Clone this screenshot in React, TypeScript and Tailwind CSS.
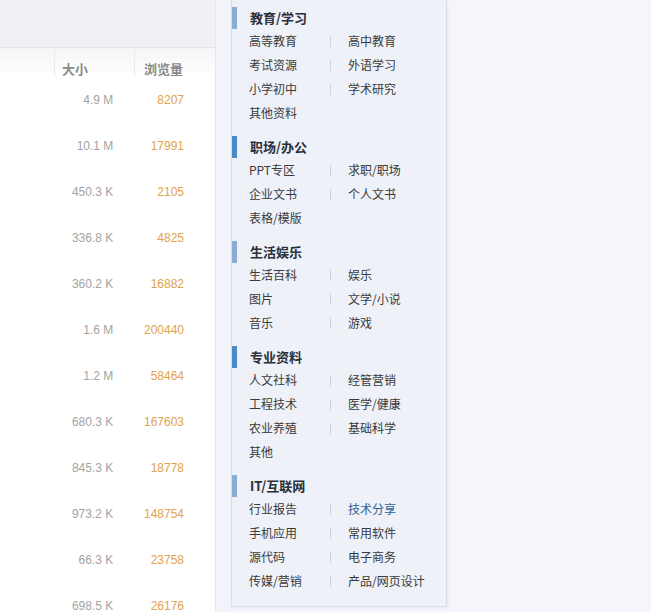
import React from "react";

type Row = { size: string; views: string };

const rows: Row[] = [
  { size: "4.9 M", views: "8207" },
  { size: "10.1 M", views: "17991" },
  { size: "450.3 K", views: "2105" },
  { size: "336.8 K", views: "4825" },
  { size: "360.2 K", views: "16882" },
  { size: "1.6 M", views: "200440" },
  { size: "1.2 M", views: "58464" },
  { size: "680.3 K", views: "167603" },
  { size: "845.3 K", views: "18778" },
  { size: "973.2 K", views: "148754" },
  { size: "66.3 K", views: "23758" },
  { size: "698.5 K", views: "26176" },
];

type Section = { title: string; bar: string; items: string[] };

const sections: Section[] = [
  { title: "教育/学习", bar: "bg-[#8cadd3]", items: ["高等教育", "高中教育", "考试资源", "外语学习", "小学初中", "学术研究", "其他资料"] },
  { title: "职场/办公", bar: "bg-[#4a89c8]", items: ["PPT专区", "求职/职场", "企业文书", "个人文书", "表格/模版"] },
  { title: "生活娱乐", bar: "bg-[#8cadd3]", items: ["生活百科", "娱乐", "图片", "文学/小说", "音乐", "游戏"] },
  { title: "专业资料", bar: "bg-[#4a89c8]", items: ["人文社科", "经管营销", "工程技术", "医学/健康", "农业养殖", "基础科学", "其他"] },
  { title: "IT/互联网", bar: "bg-[#8cadd3]", items: ["行业报告", "技术分享", "手机应用", "常用软件", "源代码", "电子商务", "传媒/营销", "产品/网页设计"] },
];

const cjk = "font-['Microsoft_YaHei','Noto_Sans_CJK_SC',sans-serif]";

function FileTable() {
  return (
    <div className="w-[216px] shrink-0 bg-white border-r border-[#e6e7ec] h-[612px] overflow-hidden">
      <div className="h-[48px] bg-[#f0f1f6] border-b border-[#e3e4e9]" />
      <div className="flex h-[29px] bg-gradient-to-b from-[#f5f5f8] to-white text-[13px] font-bold text-[#8a8a8a]">
        <div className="w-[55px] border-r border-[#ececef]" />
        <div className={`w-[80px] border-r border-[#ececef] flex items-end pl-[7px] leading-[17px] ${cjk}`}>大小</div>
        <div className={`flex-1 flex items-end pl-[9px] leading-[17px] ${cjk}`}>浏览量</div>
      </div>
      {rows.map((r) => (
        <div key={r.size + r.views} className="flex h-[46px] items-center text-[12px] font-['Liberation_Sans',Arial,sans-serif]">
          <div className="w-[55px]" />
          <div className="w-[80px] text-right pr-[21px] text-[#a3a3a3]">{r.size}</div>
          <div className="w-[81px] text-right pr-[31px] text-[#e2a24a]">{r.views}</div>
        </div>
      ))}
    </div>
  );
}

function Item({ label, right, sep }: { label: string; right?: boolean; sep?: boolean }) {
  const hot = label === "技术分享";
  return (
    <div className={`flex items-center h-[24px] ${right ? "w-[80px]" : "w-[99px]"}`}>
      <span className={`${right ? "" : "w-[81px]"} whitespace-nowrap ${hot ? "text-[#2f6296]" : "text-[#3a3a3a]"}`}>{label}</span>
      {sep && <span className="w-px h-[11px] bg-[#cfd2d8]" />}
    </div>
  );
}

function CategoryMenu() {
  return (
    <div className={`w-[216px] shrink-0 h-[607px] bg-[#eef1f8] border border-t-0 border-[#d9dde6] pt-[7px] shadow-[1px_1px_2px_rgba(0,0,0,0.06)] ${cjk}`}>
      {sections.map((s) => {
        const pairs: string[][] = [];
        for (let i = 0; i < s.items.length; i += 2) pairs.push(s.items.slice(i, i + 2));
        return (
          <div key={s.title} className="mb-[11px]">
            <div className="flex items-center h-[22px]">
              <span className={`w-[5px] h-[22px] ${s.bar}`} />
              <span className="ml-[13px] text-[13px] font-bold text-[#2a2f38]">{s.title}</span>
            </div>
            <div className="pl-[17px] text-[12px]">
              {pairs.map((p) => (
                <div key={p[0]} className="flex">
                  <Item label={p[0]} sep={p.length > 1} />
                  {p[1] && <Item label={p[1]} right />}
                </div>
              ))}
            </div>
          </div>
        );
      })}
    </div>
  );
}

export default function App() {
  return (
    <div className="flex w-[651px] h-[612px] overflow-hidden bg-[#f5f6fc]">
      <FileTable />
      <div className="w-[15px] shrink-0 bg-[#f3f4f9]" />
      <CategoryMenu />
      <div className="flex-1" />
    </div>
  );
}
